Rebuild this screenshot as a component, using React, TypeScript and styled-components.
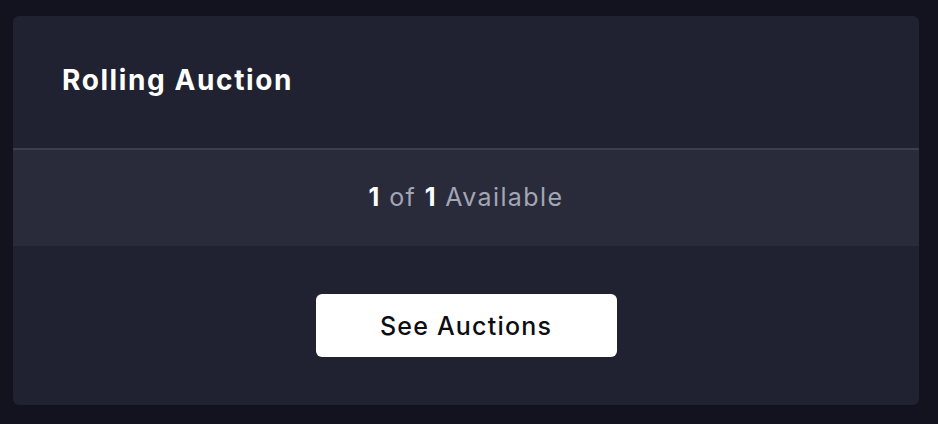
import React from "react";
import styled, { createGlobalStyle } from "styled-components";

const GlobalStyle = createGlobalStyle`
  html, body {
    margin: 0;
    padding: 0;
    background: #12131f;
  }
  body {
    font-family: Inter, "Noto Sans", sans-serif;
    -webkit-font-smoothing: antialiased;
  }
`;

const Page = styled.div`
  padding: 16px 19px 19px 13px;
  height: 424px;
  box-sizing: border-box;
`;

const Card = styled.section`
  width: 906px;
  height: 389px;
  background: #202232;
  border-radius: 6px;
  display: flex;
  flex-direction: column;
  overflow: hidden;
`;

const Header = styled.header`
  height: 134px;
  flex-shrink: 0;
  display: flex;
  align-items: center;
  padding: 0 49px 4px;
  border-bottom: 2px solid #3c3f4c;
  box-sizing: border-box;
  & h2 {
    margin: 0;
    color: #ffffff;
    font-size: 28px;
    font-weight: 700;
    letter-spacing: 1.6px;
  }
`;

const Availability = styled.div`
  height: 96px;
  flex-shrink: 0;
  background: #292b3a;
  display: flex;
  align-items: center;
  justify-content: center;
  padding-bottom: 2px;
  box-sizing: border-box;
  font-size: 25px;
  letter-spacing: 1.4px;
  color: #a3a6b4;
  & strong {
    color: #ffffff;
    font-weight: 700;
  }
`;

const Footer = styled.div`
  flex: 1;
  display: flex;
  align-items: center;
  justify-content: center;
`;

const Button = styled.button`
  width: 301px;
  height: 63px;
  border: none;
  border-radius: 6px;
  background: #ffffff;
  color: #0d0d12;
  font-family: Inter, "Noto Sans", sans-serif;
  font-size: 25px;
  font-weight: 500;
  letter-spacing: 1.2px;
  cursor: pointer;
`;

export default function App() {
  return (
    <>
      <GlobalStyle />
      <Page>
        <Card>
          <Header>
            <h2>Rolling Auction</h2>
          </Header>
          <Availability>
            <span>
              <strong>1</strong> of <strong>1</strong> Available
            </span>
          </Availability>
          <Footer>
            <Button>See Auctions</Button>
          </Footer>
        </Card>
      </Page>
    </>
  );
}
